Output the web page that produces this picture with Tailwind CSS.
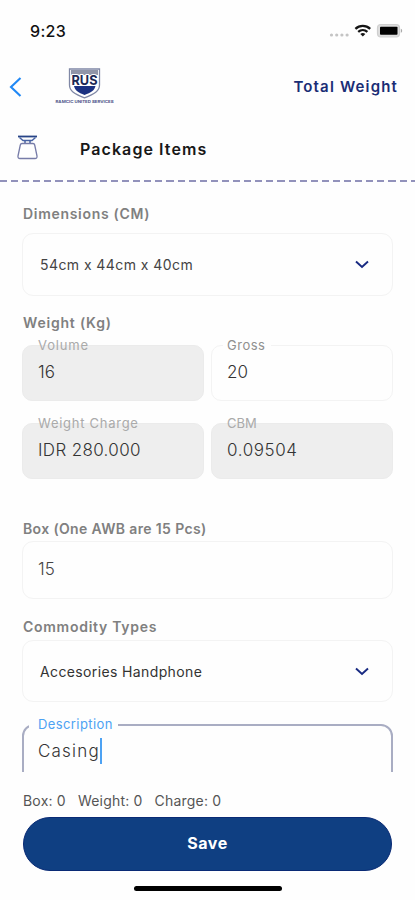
<!DOCTYPE html>
<html lang="en">
<head>
<meta charset="utf-8">
<meta name="viewport" content="width=device-width">
<title>Package Items</title>
<script src="https://cdn.jsdelivr.net/npm/@tailwindcss/browser@4"></script>
</head>
<body class="bg-[#fefefe]">
<div class="flex h-[900px] w-[415px] flex-col overflow-hidden bg-[#fefefe] font-['Inter',sans-serif] text-[#333]">
  <!-- Status bar -->
  <div class="flex h-[62px] shrink-0 items-center justify-between pr-[12px] pl-[30px]">
    <span class="text-[16px] font-medium tracking-[0.3px] text-[#111]">9:23</span>
    <svg class="h-[16px] w-[74px]" viewBox="0 0 74 16">
      <g fill="#c4c4c4"><circle cx="2.5" cy="12" r="1.6"/><circle cx="7.7" cy="12" r="1.6"/><circle cx="12.9" cy="12" r="1.6"/><circle cx="18.1" cy="12" r="1.6"/></g>
      <g fill="none" stroke="#151515" stroke-width="2.3"><path d="M26.4 5.8a11 11 0 0 1 14.8 0"/><path d="M29.2 8.9a7 7 0 0 1 9.2 0"/></g>
      <path d="M31.3 10.9a4 4 0 0 1 5 0L33.8 13.6Z" fill="#151515"/>
      <rect x="48.500" y="1.500" width="22" height="12.500" rx="3.400" fill="#ddd" stroke="#cfcfcf" stroke-width="1.2"/>
      <rect x="51" y="3.800" width="17.500" height="8" rx="0.800" fill="#000"/>
      <path d="M71.800 5.800c1.800.5 1.800 3.500 0 4Z" fill="#aaa"/>
    </svg>
  </div>
  <!-- Navigation -->
  <div class="flex h-[50px] shrink-0 items-center pr-[17px] pl-[9px]">
    <svg class="h-[20px] w-[13px]" viewBox="0 0 13 20" fill="none" stroke="#2088f5" stroke-width="2.1"><path d="M11.5 1 2 10l9.5 9"/></svg>
    <svg class="ml-[33px] h-[38px] w-[60px]" viewBox="0 0 60 38">
      <path d="M14.500 1h30v16c0 6-5 9-15 12.800-10-3.800-15-6.800-15-12.800Z" fill="#fff" stroke="#8088a6" stroke-width="1.300"/>
      <path d="M16 2h27v5H16Z" fill="#9095a8"/>
      <path d="M19 18h21.500c-1 4.500-4.500 6.500-11 9-6.300-2.500-9.500-4.500-10.500-9Z" fill="#1b3181"/>
      <text x="29.500" y="16.500" text-anchor="middle" textLength="26" lengthAdjust="spacingAndGlyphs" font-family="Inter, sans-serif" font-size="13.500" font-weight="700" fill="#1b2854" stroke="#fff" stroke-width="1.800" paint-order="stroke">RUS</text>
      <text x="0.500" y="35.200" textLength="58" lengthAdjust="spacingAndGlyphs" font-family="Inter, sans-serif" font-size="4" font-weight="700" fill="#4b5187">RAMCIC UNITED SERVICES</text>
    </svg>
    <span class="ml-auto text-[15px] font-semibold tracking-[1.15px] whitespace-nowrap text-[#1a2d75]">Total Weight</span>
  </div>
  <!-- Section title -->
  <div class="flex h-[68px] shrink-0 items-center pt-[6px] pl-[17px]">
    <svg class="-mt-[4px] h-[25px] w-[22px]" viewBox="0 0 22 25" fill="none">
      <path d="M1 1.500h19" stroke="#284487" stroke-width="1.800"/>
      <path d="M2.500 2.500 6 5.500h9l3.500-3M8 5.500V8M13 5.500V8" stroke="#4863a4" stroke-width="1.500"/>
      <path d="M5 8.500h11c1 0 1.500.5 1.700 1.500l2.300 11c.3 1.500-.5 2.500-2 2.500H3c-1.500 0-2.300-1-2-2.500L3.300 10C3.500 9 4 8.500 5 8.500Z" stroke="#777ca8" stroke-width="1.300"/>
    </svg>
    <h1 class="ml-[41px] text-[16px] font-semibold tracking-[1.08px] whitespace-nowrap text-[#181818]">Package Items</h1>
  </div>
  <div class="h-[2px] shrink-0 bg-[repeating-linear-gradient(90deg,#9292bb_0_7px,transparent_7px_11.1px)]"></div>
  <!-- Form -->
  <main class="h-[590px] shrink-0 overflow-hidden pr-[22px] pl-[22px]">
    <h2 class="mt-[20px] h-[31px] pl-px text-[14px] leading-[24px] font-semibold tracking-[0.7px] text-[#808080]">Dimensions (CM)</h2>
    <div class="flex h-[63px] items-center justify-between rounded-[11px] border-[1.5px] border-[#f3f3f3] pr-[23px] pl-[17px] text-[14px] tracking-[0.43px] text-[#444]">
      <span>54cm x 44cm x 40cm</span>
      <svg class="h-[9px] w-[14px]" viewBox="0 0 14 9" fill="none" stroke="#182a82" stroke-width="1.900"><path d="m1 1.500 6 5.500 6-5.500"/></svg>
    </div>
    <h2 class="mt-[15px] h-[34px] pl-px text-[14px] leading-[24px] font-semibold tracking-[0.8px] text-[#808080]">Weight (Kg)</h2>
    <div class="grid grid-cols-2 gap-x-[7px] gap-y-[22px]">
      <div class="relative flex h-[56px] items-center rounded-[10px] border border-[#ebebeb] bg-[#eee] px-[15px] pb-px text-[17px] font-light">
        <span class="absolute -top-[10px] left-[15px] text-[13px] leading-[18px] font-normal tracking-[0.85px] text-[#aaa]">Volume</span>16
      </div>
      <div class="relative flex h-[56px] items-center rounded-[10px] border-[1.5px] border-[#f3f3f3] px-[15px] text-[17px] font-light">
        <span class="absolute -top-[10px] left-[11px] bg-[#fefefe] pr-[6px] pl-[4px] text-[13px] leading-[18px] font-normal tracking-[0.5px] text-[#909090]">Gross</span>20
      </div>
      <div class="relative flex h-[56px] items-center rounded-[10px] border border-[#ebebeb] bg-[#eee] px-[15px] text-[17px] font-light tracking-[0.35px]">
        <span class="absolute -top-[10px] left-[15px] text-[13px] leading-[18px] font-normal tracking-[0.73px] text-[#aaa]">Weight Charge</span>IDR 280.000
      </div>
      <div class="relative flex h-[56px] items-center rounded-[10px] border border-[#ebebeb] bg-[#eee] px-[15px] text-[17px] font-light tracking-[0.6px]">
        <span class="absolute -top-[10px] left-[15px] text-[13px] leading-[18px] font-normal tracking-normal text-[#aaa]">CBM</span>0.09504
      </div>
    </div>
    <h2 class="mt-[37px] h-[25px] pl-px text-[14px] leading-[26px] font-semibold tracking-[0.36px] text-[#808080]">Box (One AWB are 15 Pcs)</h2>
    <div class="flex h-[58px] items-center rounded-[11px] border-[1.5px] border-[#f3f3f3] px-[15px] text-[17px] font-light text-[#444]">15</div>
    <h2 class="mt-[15px] h-[26px] pl-px text-[14px] leading-[26px] font-semibold tracking-[0.72px] text-[#808080]">Commodity Types</h2>
    <div class="flex h-[62px] items-center justify-between rounded-[11px] border-[1.5px] border-[#f3f3f3] pr-[23px] pl-[17px] text-[14px] tracking-[0.37px]">
      <span>Accesories Handphone</span>
      <svg class="h-[9px] w-[14px]" viewBox="0 0 14 9" fill="none" stroke="#182a82" stroke-width="1.900"><path d="m1 1.500 6 5.500 6-5.500"/></svg>
    </div>
    <div class="relative mt-[22px] flex h-[70px] items-start rounded-[12px] border-2 border-[#a9adc3] px-[14px] pt-[12px] text-[17px] leading-[26px]">
      <span class="absolute -top-[11px] left-[5px] bg-[#fefefe] pr-[5px] pl-[9px] text-[13px] leading-[18px] tracking-[0.4px] text-[#4da2f3]">Description</span>
      <span class="font-light tracking-[1.2px]">Casing</span><span class="h-[26px] w-[2px] bg-[#4da2f3]"></span>
    </div>
  </main>
  <!-- Summary and action -->
  <footer class="flex grow flex-col pr-[23px] pl-[23px]">
    <div class="mt-[18px] flex h-[20px] items-center gap-[12px] text-[14px] tracking-[0.2px] whitespace-nowrap text-[#555]"><span>Box: 0</span><span>Weight: 0</span><span>Charge: 0</span></div>
    <button class="mt-[7px] h-[54px] w-full shrink-0 rounded-full border border-[#092a75] bg-[#0f3f82] pb-[2px] text-[16px] font-bold tracking-[0.5px] text-white">Save</button>
    <div class="mt-[15px] ml-[111px] h-[5px] w-[148px] rounded-full bg-black"></div>
  </footer>
</div>
</body>
</html>
